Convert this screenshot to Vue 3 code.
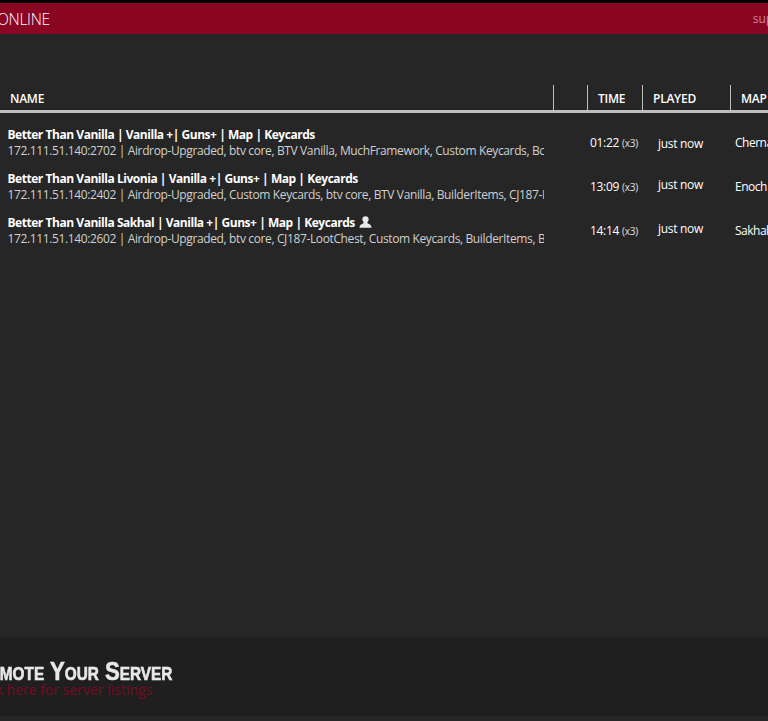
<script setup>
const rows = [
  { name: 'Better Than Vanilla | Vanilla +| Guns+ | Map | Keycards', sub: '172.111.51.140:2702 | Airdrop-Upgraded, btv core, BTV Vanilla, MuchFramework, Custom Keycards, Bc', time: '01:22', map: 'Chernarus', cls: 'low', user: false },
  { name: 'Better Than Vanilla Livonia | Vanilla +| Guns+ | Map | Keycards', sub: '172.111.51.140:2402 | Airdrop-Upgraded, Custom Keycards, btv core, BTV Vanilla, BuilderItems, CJ187-LootChest', time: '13:09', map: 'Enoch', cls: '', user: false },
  { name: 'Better Than Vanilla Sakhal | Vanilla +| Guns+ | Map | Keycards', sub: '172.111.51.140:2602 | Airdrop-Upgraded, btv core, CJ187-LootChest, Custom Keycards, BuilderItems, BTV Vanilla', time: '14:14', map: 'Sakhal', cls: '', user: true },
]
</script>

<template>
  <div class="page">
    <header class="bar">
      <span class="title">ONLINE</span>
      <span class="support">support</span>
    </header>
    <main class="content">
      <div class="thead">
        <div class="th name">NAME</div>
        <div class="th blank"></div>
        <div class="th time">TIME</div>
        <div class="th played">PLAYED</div>
        <div class="th map">MAP</div>
      </div>
      <div class="tbody">
        <div v-for="r in rows" :key="r.sub" class="row">
          <div class="cell-name">
            <div class="server">{{ r.name }}<svg v-if="r.user" class="user" viewBox="0 0 14 13" width="13" height="12"><circle cx="7" cy="3.6" r="3.4" fill="#e8e8e8"/><path d="M5 6.5 L9 6.5 L9.4 8 C11.5 8.8 13.4 9.6 13.6 12.6 L0.4 12.6 C0.6 9.6 2.5 8.8 4.6 8 Z" fill="#e8e8e8"/></svg></div>
            <div class="sub">{{ r.sub }}</div>
          </div>
          <div class="cell-time">{{ r.time }} <small>(x3)</small></div>
          <div class="cell-played" :class="r.cls">just now</div>
          <div class="cell-map">{{ r.map }}</div>
        </div>
      </div>
    </main>
    <footer class="promo">
      <div class="promo-title">Promote Your Server</div>
      <div class="promo-link">Click here for server listings</div>
    </footer>
  </div>
</template>

<style>
html, body { margin: 0; background: #262626; overflow: hidden; }
</style>

<style scoped>
.page {
  width: 768px;
  height: 721px;
  overflow: hidden;
  display: flex;
  flex-direction: column;
  background: #262626;
  font-family: "Open Sans", "Noto Sans", sans-serif;
  color: #fff;
}
.bar {
  box-sizing: border-box;
  height: 34px;
  flex: none;
  border-top: 3px solid #000;
  background: #8a0623;
  display: flex;
  align-items: center;
  justify-content: space-between;
  overflow: hidden;
}
.title {
  margin-left: -3px;
  font-size: 15.5px;
  font-weight: 300;
  letter-spacing: -0.3px;
  color: #fff;
}
.support {
  margin-right: -29px;
  font-size: 12px;
  color: #c98a98;
}
.content { flex: 1; min-height: 0; padding-top: 51px; }
.thead {
  display: grid;
  grid-template-columns: 553px 34px 55px 88px 1fr;
  height: 25px;
  border-bottom: 3px solid #bfbfbf;
}
.th {
  box-sizing: border-box;
  font-size: 12px;
  font-weight: 600;
  line-height: 27px;
  letter-spacing: -0.25px;
  padding-left: 10px;
  border-left: 1px solid #bfbfbf;
  white-space: nowrap;
}
.th.name { border-left: 0; }
.tbody { padding-top: 14px; }
.row {
  display: grid;
  grid-template-columns: 590px 68px 77px 1fr;
  height: 44px;
}
.cell-name { width: 536.5px; padding-left: 7.5px; overflow: hidden; white-space: nowrap; }
.server {
  font-size: 12px;
  font-weight: 700;
  letter-spacing: -0.46px;
  line-height: 16px;
  height: 16px;
  color: #fff;
}
.user { margin-left: 4px; vertical-align: -1px; }
.sub {
  font-size: 12px;
  line-height: 16px;
  letter-spacing: -0.37px;
  color: #d0d0d0;
}
.cell-time, .cell-played, .cell-map {
  font-size: 12px;
  line-height: 16px;
  letter-spacing: -0.3px;
  padding-top: 8px;
  white-space: nowrap;
  color: #fff;
}
.cell-map { letter-spacing: -0.5px; }
.cell-played { padding-top: 6px; }
.cell-played.low { padding-top: 9px; }
small { font-size: 10px; letter-spacing: -0.2px; color: #e0e0e0; }
.promo {
  flex: none;
  box-sizing: border-box;
  height: 79px;
  margin-bottom: 5px;
  background: #1f1f1f;
  padding-top: 24px;
  overflow: hidden;
}
.promo-title {
  margin-left: -38px;
  font-family: "Liberation Sans", sans-serif;
  font-variant: small-caps;
  font-weight: 700;
  font-size: 26px;
  line-height: 20px;
  color: #e8e8e8;
  -webkit-text-stroke: 0.6px #e8e8e8;
  filter: blur(0.4px);
  white-space: nowrap;
  transform: scaleX(0.853);
  transform-origin: left center;
}
.promo-link {
  margin-left: -27px;
  margin-top: 2px;
  font-size: 14px;
  line-height: 14px;
  color: #7a0a22;
  white-space: nowrap;
}
</style>
